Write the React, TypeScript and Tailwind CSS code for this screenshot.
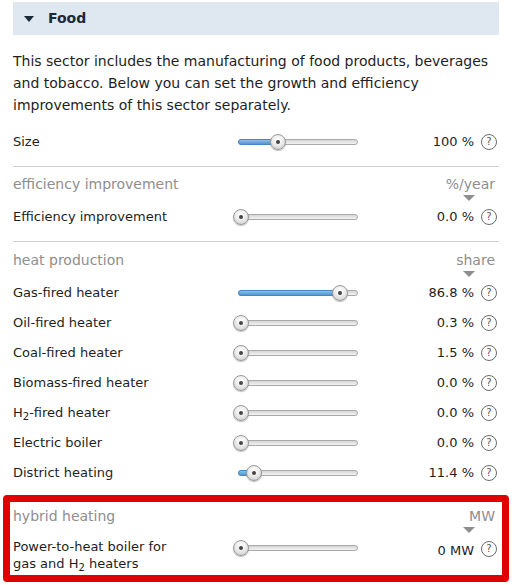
import React from "react";

const FONT = '"DejaVu Sans", "Liberation Sans", sans-serif';

function Thumb() {
  return (
    <div className="absolute top-1/2 -translate-x-1/2 -translate-y-1/2 w-[16px] h-[16px] rounded-full border border-[#9a9a9a] bg-[radial-gradient(circle_at_50%_35%,#ffffff_0%,#ececec_45%,#c4c4c4_100%)] shadow-[0_1px_1px_rgba(0,0,0,0.25)] flex items-center justify-center">
      <div className="w-[4px] h-[4px] rounded-full bg-[#444]" />
    </div>
  );
}

function Slider({ pct }: { pct: number }) {
  const thumbX = 3 + (pct / 100) * 114;
  return (
    <div className="relative w-[120px] h-[16px] shrink-0">
      <div className="absolute left-0 right-0 top-1/2 -translate-y-1/2 h-[6px] rounded-full border border-[#a9a9a9] bg-[linear-gradient(#d6d6d6,#f3f3f3)]" />
      {pct > 0 && (
        <div
          className="absolute left-0 top-1/2 -translate-y-1/2 h-[6px] rounded-full border border-[#4a86c0] bg-[linear-gradient(#8cc0ea,#4f97d6)]"
          style={{ width: thumbX }}
        />
      )}
      <div className="absolute top-0 bottom-0" style={{ left: thumbX }}>
        <Thumb />
      </div>
    </div>
  );
}

function Help() {
  return (
    <div className="w-[16px] h-[16px] rounded-full border-[1.5px] border-[#6b6b6b] flex items-center justify-center text-[10px] leading-none text-[#555] shrink-0">
      ?
    </div>
  );
}

function Row({ label, pct, value }: { label: React.ReactNode; pct: number; value: string }) {
  return (
    <div className="flex items-center h-[30px]">
      <div className="w-[225px] text-[13px] text-[#1e1e1e]">{label}</div>
      <Slider pct={pct} />
      <div className="flex-1 text-right text-[13px] text-[#1e1e1e] pr-[7px]">{value}</div>
      <Help />
      <div className="w-[2px]" />
    </div>
  );
}

function SectionHead({ title, unit }: { title: string; unit: string }) {
  return (
    <div>
      <div className="flex items-center h-[20px] text-[14px] text-[#8e8e8e]">
        <div className="flex-1">{title}</div>
        <div className="pr-[4px]">{unit}</div>
      </div>
      <div className="flex justify-end pr-[24px] h-[7px] items-start mt-[1px]">
        <div className="w-0 h-0 border-l-[6px] border-r-[6px] border-t-[6px] border-l-transparent border-r-transparent border-t-[#8e8e8e]" />
      </div>
    </div>
  );
}

const H2 = () => (
  <>
    H<span className="text-[10px] relative top-[3px]">2</span>
  </>
);

export default function App() {
  return (
    <div className="w-[512px] h-[585px] bg-white px-[13px] pt-[2px] overflow-hidden" style={{ fontFamily: FONT }}>
      <div className="h-[33px] bg-[#dfe7f1] flex items-center pl-[11px]">
        <div className="w-0 h-0 border-l-[5px] border-r-[5px] border-t-[6px] border-l-transparent border-r-transparent border-t-[#1b2a3b]" />
        <div className="ml-[14px] text-[14px] font-bold text-[#1b2a3b]">Food</div>
      </div>
      <p className="mt-[15px] text-[14px] leading-[22px] text-[#1e1e1e]">
        This sector includes the manufacturing of food products, beverages and tobacco. Below you can set the growth and efficiency improvements of this sector separately.
      </p>
      <div className="mt-[11px]">
        <Row label="Size" pct={32.5} value="100 %" />
      </div>
      <div className="mt-[9px] border-t border-[#cfcfcf]" />
      <div className="pt-[7px]">
        <SectionHead title="efficiency improvement" unit="%/year" />
        <Row label="Efficiency improvement" pct={0} value="0.0 %" />
      </div>
      <div className="mt-[9px] border-t border-[#cfcfcf]" />
      <div className="pt-[8px]">
        <SectionHead title="heat production" unit="share" />
        <Row label="Gas-fired heater" pct={86.8} value="86.8 %" />
        <Row label="Oil-fired heater" pct={0} value="0.3 %" />
        <Row label="Coal-fired heater" pct={0} value="1.5 %" />
        <Row label="Biomass-fired heater" pct={0} value="0.0 %" />
        <Row label={<><H2 />-fired heater</>} pct={0} value="0.0 %" />
        <Row label="Electric boiler" pct={0} value="0.0 %" />
        <Row label="District heating" pct={11.4} value="11.4 %" />
      </div>
      <div className="mt-[7px] -mx-[10px] border-[7px] border-[#e00000] rounded-[4px] px-[3px] pt-[4px] pb-[2px]">
        <SectionHead title="hybrid heating" unit="MW" />
        <div className="flex items-start pt-[4px]">
          <div className="w-[225px] text-[13px] leading-[17px] text-[#1e1e1e]">
            Power-to-heat boiler for
            <br />
            gas and <H2 /> heaters
          </div>
          <div className="mt-[2px]">
            <Slider pct={0} />
          </div>
          <div className="flex-1 text-right text-[13px] text-[#1e1e1e] pr-[7px] mt-[3px]">0 MW</div>
          <div className="mt-[3px]">
            <Help />
          </div>
          <div className="w-[2px]" />
        </div>
      </div>
    </div>
  );
}
